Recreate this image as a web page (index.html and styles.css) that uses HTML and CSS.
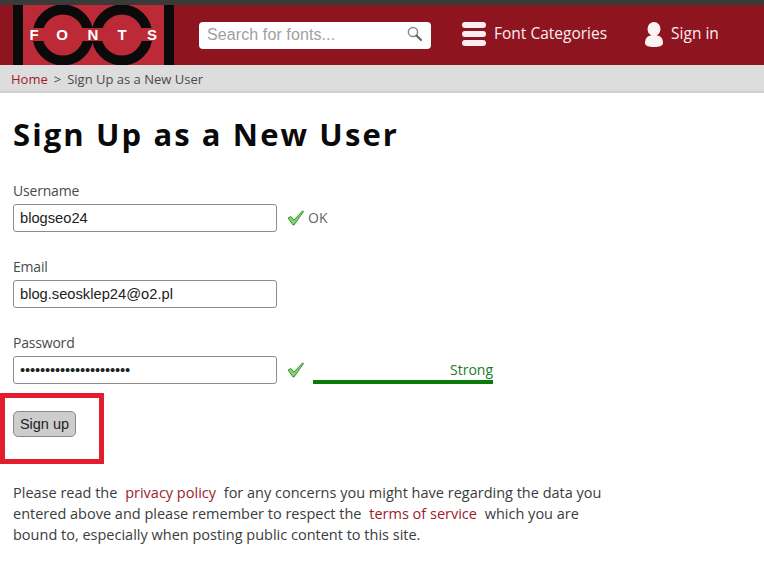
FILE: index.html
```html
<!DOCTYPE html>
<html>
  <head>
    <meta charset="UTF-8">
    <title>Sign Up as a New User</title>
    <link rel="stylesheet" href="styles.css">
  </head>
  <body>
    <header class="site-header">
      <svg class="logo" width="161" height="60" viewBox="0 0 161 60">
        <rect width="161" height="60" fill="#bb2a36"/>
        <rect width="10" height="60" fill="#0a0a0a"/>
        <rect x="151" width="10" height="60" fill="#0a0a0a"/>
        <circle cx="50" cy="30" r="25.5" fill="none" stroke="#0a0a0a" stroke-width="10"/>
        <circle cx="109" cy="30" r="25.5" fill="none" stroke="#0a0a0a" stroke-width="10"/>
        <rect x="15" y="23" width="131" height="13" fill="#bb2a36"/>
        <text class="logo-text" x="21" y="35">F</text>
        <text class="logo-text" x="49" y="35">O</text>
        <text class="logo-text" x="80" y="35">N</text>
        <text class="logo-text" x="109" y="35">T</text>
        <text class="logo-text" x="139" y="35">S</text>
      </svg>
      <form class="search">
        <span class="search-text">Search for fonts...</span>
        <svg class="search-icon" width="17" height="17" viewBox="0 0 17 17">
          <circle cx="7" cy="7" r="4.6" fill="#fff" stroke="#8a8a8a" stroke-width="1.5"/>
          <path d="M10.5 10.5L15 15" stroke="#666" stroke-width="2.2" stroke-linecap="round"/>
        </svg>
      </form>
      <a class="nav-item nav-categories" href="#">
        <svg width="24" height="24" viewBox="0 0 24 24">
          <rect y="0" width="24" height="6" rx="3" fill="#fbeef0"/>
          <rect y="9" width="24" height="6" rx="3" fill="#fbeef0"/>
          <rect y="18" width="24" height="6" rx="3" fill="#fbeef0"/>
        </svg>
        <span class="nav-label">Font Categories</span>
      </a>
      <a class="nav-item nav-signin" href="#">
        <svg width="18" height="25" viewBox="0 0 18 25">
          <ellipse cx="9" cy="7" rx="6.5" ry="7" fill="#fbf4f5"/>
          <path d="M0 21C0 15 4 13 9 13S18 15 18 21C18 24 14 25 9 25S0 24 0 21Z" fill="#fbf4f5"/>
        </svg>
        <span class="nav-label">Sign in</span>
      </a>
    </header>
    <nav class="breadcrumb">
      <a href="#">Home</a><span class="crumb-sep">&gt;</span>Sign Up as a New User
    </nav>
    <main class="content">
      <h1>Sign Up as a New User</h1>
      <form class="signup">
        <div class="form-group">
          <label>Username</label>
          <div class="field-row">
            <input type="text" value="blogseo24">
            <svg class="check" width="17" height="16" viewBox="0 0 17 16">
              <path d="M1 8L4 6.5L7 10L15.5 1L16.5 1.5L7 15H6Z" fill="#7ed36f" stroke="#3f8f3a" stroke-width="1"/>
            </svg>
            <span class="ok">OK</span>
          </div>
        </div>
        <div class="form-group">
          <label>Email</label>
          <div class="field-row">
            <input type="text" value="blog.seosklep24@o2.pl">
          </div>
        </div>
        <div class="form-group">
          <label>Password</label>
          <div class="field-row">
            <input class="password" type="password" value="aaaaaaaaaaaaaaaaaaaaaa">
            <svg class="check" width="17" height="16" viewBox="0 0 17 16">
              <path d="M1 8L4 6.5L7 10L15.5 1L16.5 1.5L7 15H6Z" fill="#7ed36f" stroke="#3f8f3a" stroke-width="1"/>
            </svg>
            <div class="strength">Strong</div>
          </div>
        </div>
        <button type="button" class="submit">Sign up</button>
      </form>
      <p class="notice">
        Please read the <a href="#">privacy policy</a> for any concerns you might have regarding the data you<br>
        entered above and please remember to respect the <a href="#">terms of service</a> which you are<br>
        bound to, especially when posting public content to this site.
      </p>
    </main>
    <div class="highlight"></div>
  </body>
</html>
```

FILE: styles.css
```css
* {
  box-sizing: border-box;
}
body {
  margin: 0;
  position: relative;
  background-color: white;
  font-family: "Open Sans", sans-serif;
  font-size: 14px;
  color: #4a4a4a;
}
a {
  color: #9b1c2c;
  text-decoration: none;
}
.site-header {
  display: flex;
  align-items: center;
  height: 65px;
  padding-left: 13px;
  border-top: 5px solid #3a3a38;
  background-color: #8e1520;
}
.logo {
  flex: none;
}
.logo-text {
  font-family: "Liberation Sans", sans-serif;
  font-size: 15px;
  font-weight: bold;
  text-anchor: middle;
  fill: white;
}
.search {
  display: flex;
  align-items: center;
  justify-content: space-between;
  width: 232px;
  height: 27px;
  margin-left: 25px;
  padding: 0 7px 0 8px;
  border-radius: 4px;
  background-color: white;
}
.search-text {
  font-family: "Liberation Sans", sans-serif;
  font-size: 16px;
  letter-spacing: 0.1px;
  color: #a0a0a0;
}
.search-icon {
  margin: 0 1px 3px 0;
}
.nav-item {
  display: flex;
  align-items: center;
  gap: 8px;
  padding-bottom: 2px;
  font-size: 15.5px;
  color: #fbeef0;
}
.nav-label {
  padding-bottom: 2px;
}
.nav-categories {
  margin-left: 31px;
}
.nav-signin {
  margin-left: 38px;
}
.breadcrumb {
  height: 28px;
  padding: 5px 11px 0;
  border-bottom: 2px solid #d0d0d0;
  background-color: #dddddd;
  font-size: 13px;
  color: #4a4a4a;
}
.crumb-sep {
  margin: 0 6px;
}
.content {
  padding: 0 13px;
}
h1 {
  margin: 22px 0 27px;
  font-size: 31px;
  line-height: 38px;
  letter-spacing: 2.1px;
  font-weight: bold;
  color: #0a0a0a;
}
.form-group {
  margin-bottom: 24px;
}
label {
  display: block;
  height: 24px;
  line-height: 22px;
  letter-spacing: -0.2px;
}
.field-row {
  display: flex;
  align-items: center;
  height: 28px;
}
input {
  width: 264px;
  height: 28px;
  padding: 0 6px;
  border: 1px solid #8c8c8c;
  border-radius: 3px;
  font-family: "Liberation Sans", sans-serif;
  font-size: 14.7px;
  color: #222;
}
input.password {
  letter-spacing: -0.14px;
}
.check {
  margin-left: 10px;
  flex: none;
}
.ok {
  margin: 0 0 2px 4px;
  color: #666;
}
.strength {
  width: 180px;
  height: 28px;
  margin-left: 9px;
  border-bottom: 4px solid #0a7a0a;
  text-align: right;
  line-height: 28px;
  color: #1f7a1f;
}
.submit {
  display: block;
  width: 63px;
  height: 26px;
  margin-top: 27px;
  padding: 0;
  border: 1px solid #8a8a8a;
  border-radius: 5px;
  background-color: #cdcdcd;
  font-family: "Liberation Sans", sans-serif;
  font-size: 14.5px;
  color: #222;
}
.notice {
  margin: 45px 0 0;
  font-size: 14.5px;
  line-height: 21px;
  color: #3c3c3c;
}
.notice a {
  margin: 0 4px;
}
.highlight {
  position: absolute;
  left: 0;
  top: 393px;
  width: 104px;
  height: 71px;
  border: 5px solid #e21d2e;
}
```
